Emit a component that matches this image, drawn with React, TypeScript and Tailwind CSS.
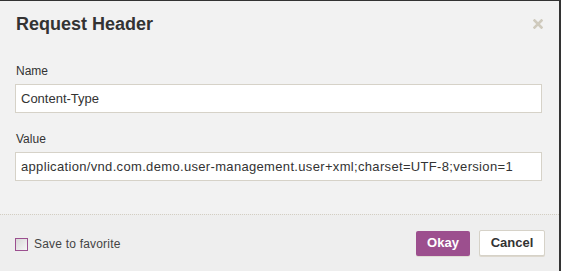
import React from "react";

export default function App() {
  return (
    <div className="w-[561px] h-[271px] bg-[#f2f2f2] border-t border-r-2 border-[#333] flex flex-col font-['Liberation_Sans',Arial,sans-serif] text-[#333] overflow-hidden">
      <div className="flex items-center justify-between pl-4 pr-4 mt-[13px] h-[20px]">
        <h3 className="text-[18px] leading-[20px] font-bold text-[#333]">Request Header</h3>
        <svg width="10" height="10" viewBox="0 0 10 10" className="block">
          <path d="M1.5 1.5 L8.5 8.5 M8.5 1.5 L1.5 8.5" stroke="#cfcabd" strokeWidth="2.6" strokeLinecap="square" />
        </svg>
      </div>
      <div className="flex-1 flex flex-col pl-[15px] pr-[17px]">
        <label className="mt-[29px] text-[12px] leading-[16px] text-[#333] pl-px">Name</label>
        <div className="mt-[5px] h-[29px] bg-white border border-[#d6d2c8] flex items-center pl-[5px] text-[13px] text-[#333]">
          Content-Type
        </div>
        <label className="mt-[18px] text-[12px] leading-[16px] text-[#333] pl-px">Value</label>
        <div className="mt-[5px] h-[29px] bg-white border border-[#d6d2c8] flex items-center pl-[5px] text-[13px] tracking-[0.33px] text-[#333] whitespace-nowrap">
          application/vnd.com.demo.user-management.user+xml;charset=UTF-8;version=1
        </div>
      </div>
      <div className="h-[57px] border-t border-dotted border-[#d3cec2] bg-[#eeeeee] flex items-center justify-between pl-[15px] pr-[14px]">
        <div className="flex items-center gap-[6px] mt-[2px]">
          <div className="w-[13px] h-[13px] border border-[#9b4f8f] bg-gradient-to-br from-[#d8d8d8] to-[#f6f6f6]" />
          <span className="text-[12px] tracking-[0.2px] text-[#444]">Save to favorite</span>
        </div>
        <div className="flex items-center gap-[9px]">
          <button className="w-[54px] h-[25px] rounded-[2px] bg-[#9c4f8e] text-white text-[13px] font-bold shadow-[0_1px_0_#e0dcd4]">
            Okay
          </button>
          <button className="w-[66px] h-[26px] rounded-[2px] bg-white border border-[#d6d2c8] text-[#333] text-[13px] font-bold shadow-[0_1px_0_#ddd8ce]">
            Cancel
          </button>
        </div>
      </div>
    </div>
  );
}
